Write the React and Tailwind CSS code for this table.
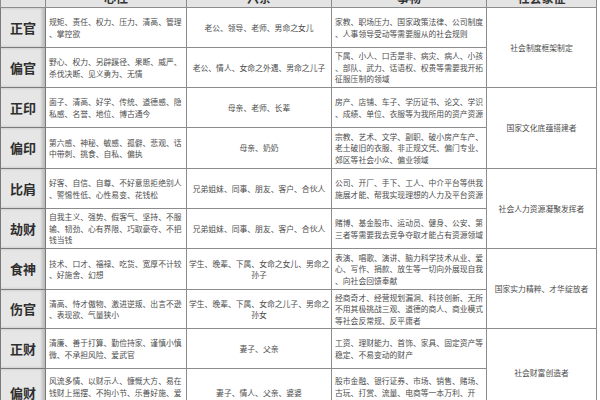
import React from "react";

const rows = [
  {
    name: "正官",
    h: 40,
    xin: ["规矩、责任、权力、压力、清高、管理", "、掌控欲"],
    qin: ["老公、领导、老师、男命之女儿"],
    shi: ["家教、职场压力、国家政策法律、公司制度", "、人事领导受动等需要服从的社会规则"],
    she: { text: "社会制度框架制定", span: 2 },
  },
  {
    name: "偏官",
    h: 40,
    xin: ["野心、权力、另辟蹊径、果断、威严、", "杀伐决断、见义勇为、无情"],
    qin: ["老公、情人、女命之外遇、男命之儿子"],
    shi: ["下属、小人、口舌是非、病灾、病人、小孩", "、部队、武力、话语权、权贵等需要我开拓", "征服压制的领域"],
  },
  {
    name: "正印",
    h: 40,
    xin: ["面子、清高、好学、传统、道德感、隐", "私感、名誉、地位、博古通今"],
    qin: ["母亲、老师、长辈"],
    shi: ["房产、店铺、车子、学历证书、论文、学识", "、成绩、单位、衣服等为我所用的资产资源"],
    she: { text: "国家文化底蕴搭建者", span: 2 },
  },
  {
    name: "偏印",
    h: 41,
    xin: ["第六感、神秘、敏感、孤僻、悲观、话", "中带刺、挑食、自私、偏执"],
    qin: ["母亲、奶奶"],
    shi: ["宗教、艺术、文学、副职、破小房产车产、", "老土破旧的衣服、非正规文凭、偏门专业、", "郊区等社会小众、偏业领域"],
  },
  {
    name: "比肩",
    h: 40,
    xin: ["好客、自信、自尊、不好意思拒绝别人", "、警惕性低、心性易变、花钱松"],
    qin: ["兄弟姐妹、同事、朋友、客户、合伙人"],
    shi: ["公司、开厂、手下、工人、中介平台等供我", "施展才能、帮我实现理想的人力及平台资源"],
    she: { text: "社会人力资源凝聚发挥者", span: 2 },
  },
  {
    name: "劫财",
    h: 40,
    xin: ["自我主义、强势、假客气、坚持、不服", "输、韧劲、心有界限、巧取豪夺、不把", "钱当钱"],
    qin: ["兄弟姐妹、同事、朋友、客户、合伙人"],
    shi: ["赌博、基金股市、运动员、健身、公安、第", "三者等需要我去竞争夺取才能占有资源领域"],
  },
  {
    name: "食神",
    h: 41,
    xin: ["技术、口才、福禄、吃货、宽厚不计较", "、好施舍、幻想"],
    qin: ["学生、晚辈、下属、女命之女儿、男命之", "孙子"],
    shi: ["表演、唱歌、演讲、脑力科学技术从业、爱", "心、写作、捐款、放生等一切向外展现自我", "、向社会回馈奉献"],
    she: { text: "国家实力精粹、才华绽放者", span: 2 },
  },
  {
    name: "伤官",
    h: 39,
    xin: ["清高、恃才傲物、激进逆叛、出言不逊", "、表现欲、气量狭小"],
    qin: ["学生、晚辈、下属、女命之儿子、男命之", "孙女"],
    shi: ["经商奇才、经营规划漏洞、科技创新、无所", "不用其极挑战三观、道德的商人、商业模式", "等社会反常规、反平庸者"],
  },
  {
    name: "正财",
    h: 40,
    xin: ["清廉、善于打算、勤俭持家、谨慎小慎", "微、不承担风险、爱武官"],
    qin: ["妻子、父亲"],
    shi: ["工资、理财能力、首饰、家具、固定资产等", "稳定、不易变动的财产"],
    she: { text: "社会财富创造者", span: 2 },
  },
  {
    name: "偏财",
    h: 48,
    xin: ["风流多情、以财示人、慷慨大方、易在", "钱财上摇摆、不拘小节、乐善好施、爱", "面子"],
    qin: ["妻子、情人、父亲、婆婆"],
    shi: ["股市金融、银行证券、市场、销售、赌场、", "古玩、打赏、流量、电商等一本万利、开", "拓性强的领域"],
  },
];

function Lines({ lines }) {
  return lines.map((l, i) => (
    <div key={i} className="whitespace-nowrap">
      {l}
    </div>
  ));
}

const cell = "border border-[#8c8c8c] text-[7.8px] leading-[11.5px] text-[#4d4d4d] align-middle";
const head = "border border-[#8c8c8c] text-[12px] font-bold text-[#333]";

export default function App() {
  return (
    <div
      className="w-[600px] h-[400px] overflow-hidden bg-white"
      style={{ fontFamily: '"Noto Sans CJK SC", "Noto Sans", sans-serif' }}
    >
      <table className="-mt-[13px] border-collapse table-fixed w-[596px]">
        <colgroup>
          <col className="w-[45px]" />
          <col className="w-[141px]" />
          <col className="w-[145px]" />
          <col className="w-[155px]" />
          <col className="w-[110px]" />
        </colgroup>
        <thead>
          <tr className="h-[20px] bg-[#e4e4e4]">
            <th className={head}></th>
            <th className={head}>心性</th>
            <th className={head}>六亲</th>
            <th className={head}>事物</th>
            <th className={head}>社会象征</th>
          </tr>
        </thead>
        <tbody>
          {rows.map((r) => (
            <tr key={r.name} style={{ height: r.h }}>
              <td className="border border-[#7a7a7a] bg-[#e6e6e6] shadow-[inset_-3px_0_3px_rgba(0,0,0,0.18)] text-center align-middle text-[13px] font-bold text-[#2e2e2e]">
                {r.name}
              </td>
              <td className={`${cell} pl-[3px] pr-[2px] text-left`}>
                <Lines lines={r.xin} />
              </td>
              <td className={`${cell} px-[2px] text-center`}>
                <Lines lines={r.qin} />
              </td>
              <td className={`${cell} pl-[3px] pr-[2px] text-left`}>
                <Lines lines={r.shi} />
              </td>
              {r.she && (
                <td rowSpan={r.she.span} className={`${cell} text-center`}>
                  {r.she.text}
                </td>
              )}
            </tr>
          ))}
        </tbody>
      </table>
    </div>
  );
}
